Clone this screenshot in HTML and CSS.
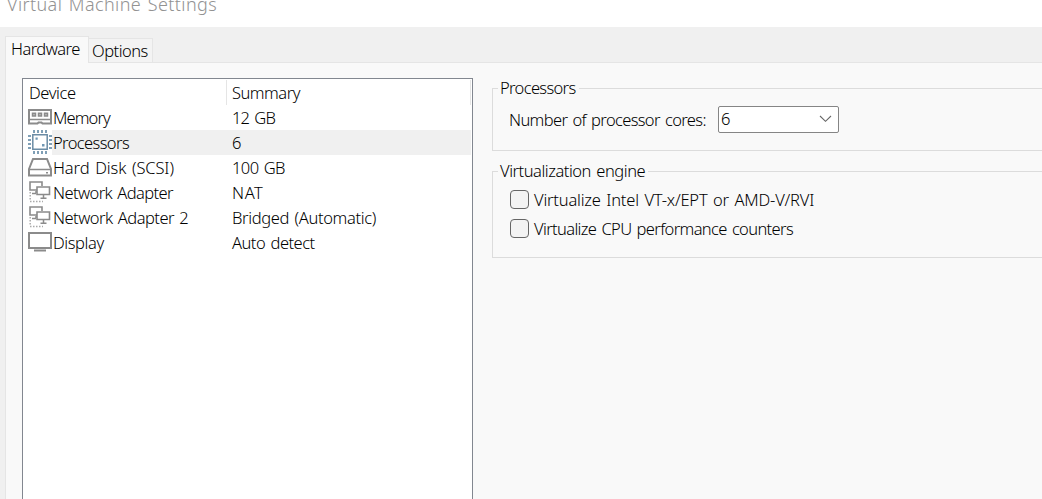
FILE: index.html
```html
<!DOCTYPE html>
<html lang="en">
<head>
<meta charset="utf-8">
<title>Virtual Machine Settings</title>
<link rel="stylesheet" href="styles.css">
</head>
<body>
<header class="titlebar"><span class="title">Virtual Machine Settings</span></header>
<main class="dialog">
  <nav class="tabs">
    <div class="tab active"><span class="t-hardware">Hardware</span></div>
    <div class="tab"><span class="t-options">Options</span></div>
  </nav>
  <section class="page">
    <div class="devices">
      <div class="row head"><span class="name"><span class="t-device">Device</span></span><span class="value"><span class="t-summary">Summary</span></span></div>
      <div class="row">
        <svg class="icon" viewBox="0 0 24 25" fill="none" stroke="#8b8b8b" stroke-width="2"><path d="M1 5H23V18.5H14.5L13.5 17.5H10.5L9.5 18.5H1Z"/><path d="M1 14.5H23" stroke-width="1.5"/><path d="M4.5 8.2H7.5V11H4.5ZM10.5 8.2H13.5V11H10.5ZM16.5 8.2H19.5V11H16.5Z" fill="#bbb" stroke-width="1.5"/></svg>
        <span class="name"><span class="t-memory">Memory</span></span><span class="value"><span class="t-12">12 GB</span></span>
      </div>
      <div class="row selected">
        <svg class="icon" viewBox="0 0 24 25" fill="none" stroke="#6b8ca5"><path stroke="#7f9fb6" stroke-width="3" stroke-dasharray="2 2" d="M5 1.5H19M5 22.5H19M1.5 5V19M22.5 5V19"/><path stroke-width="1.5" d="M4.8 4.8H19.2V19.2H4.8Z" fill="#fff"/><path fill="#7097b4" stroke="none" d="M7.5 7.5h2.2v2.2H7.5zM14 14h2.5v2.5h-2.5z"/></svg>
        <span class="name"><span class="t-processors">Processors</span></span><span class="value"><span class="t-6">6</span></span>
      </div>
      <div class="row">
        <svg class="icon" viewBox="0 0 24 25" fill="none" stroke="#8b8b8b" stroke-width="2"><path d="M1 14L5 4H19L23 14V20.5H1Z"/><path d="M1 14.5H23" stroke-width="1.5"/><path fill="#8b8b8b" stroke="none" d="M18 17h2v1.5h-2z"/></svg>
        <span class="name"><span class="t-disk">Hard Disk (SCSI)</span></span><span class="value"><span class="t-100">100 GB</span></span>
      </div>
      <div class="row">
        <svg class="icon" viewBox="0 0 24 25"><use href="#network"/></svg>
        <span class="name"><span class="t-net">Network Adapter</span></span><span class="value"><span class="t-nat">NAT</span></span>
      </div>
      <div class="row">
        <svg class="icon" viewBox="0 0 24 25"><g id="network" fill="none" stroke="#8b8b8b" stroke-width="1.6"><path d="M9 10H2V2H14V6M9 7H21.5V14.5H9Z"/><path d="M8 11V13M4 13.5H8M15.5 15V18M12.5 18.2H18.5" stroke-width="1.5"/><path d="M2.2 12V21M2 21.5H15" stroke="#aaa" stroke-width="1.5" stroke-dasharray="1.5 1.5"/></g></svg>
        <span class="name"><span class="t-net2">Network Adapter 2</span></span><span class="value"><span class="t-bridged">Bridged (Automatic)</span></span>
      </div>
      <div class="row">
        <svg class="icon" viewBox="0 0 24 25" fill="none" stroke="#8b8b8b" stroke-width="2"><path d="M1 3H23V18H1Z"/><path d="M6 20.5H18"/></svg>
        <span class="name"><span class="t-display">Display</span></span><span class="value"><span class="t-auto">Auto detect</span></span>
      </div>
    </div>
    <div class="settings">
      <fieldset class="group processors">
        <legend><span class="t-group">Processors</span></legend>
        <div class="field">
          <span class="t-cores">Number of processor cores:</span>
          <div class="combo"><span class="t-6">6</span><svg width="13" height="8" viewBox="0 0 13 8" fill="none" stroke="#666" stroke-width="1.1"><path d="M1 1L6.5 6.3L12 1"/></svg></div>
        </div>
      </fieldset>
      <fieldset class="group engine">
        <legend><span class="t-engine">Virtualization engine</span></legend>
        <div class="option"><i class="box"></i><span class="t-vtx">Virtualize Intel VT-x/EPT or AMD-V/RVI</span></div>
        <div class="option"><i class="box"></i><span class="t-cpu">Virtualize CPU performance counters</span></div>
      </fieldset>
    </div>
  </section>
</main>
</body>
</html>
```
FILE: styles.css
```css
* { box-sizing: border-box; }
body {
  margin: 0;
  width: 1042px;
  height: 499px;
  overflow: hidden;
  background: #f0f0f0;
  color: #000;
  font: 300 16.5px/20px "Noto Sans", "DejaVu Sans", sans-serif;
  white-space: nowrap;
  word-spacing: 1.5px;
}
.titlebar { height: 27px; background: #fff; overflow: hidden; padding-left: 7px; }
.title { display: block; margin-top: -6px; font-size: 18px; line-height: 20px; color: #929292; letter-spacing: .4px; }
.dialog { height: 472px; padding: 9px 0 0 5px; }
.tabs { display: flex; align-items: flex-end; height: 26px; }
.tab { width: 64px; height: 24px; padding: 2px 0 0 3px; border: 1px solid #e5e5e5; border-left: 0; border-bottom: 0; background: #f3f3f3; }
.tab.active { width: 84px; height: 27px; margin-bottom: -1px; padding: 2px 0 0 5px; border-left: 1px solid #e5e5e5; background: #f9f9f9; z-index: 1; }
.page { display: flex; align-items: flex-start; width: 1040px; height: 440px; padding: 15px 0 0 16px; border: 1px solid #e5e5e5; background: #f9f9f9; }
.devices { flex: none; width: 451px; height: 430px; padding: 1px; border: 1px solid #828790; background: #fff; }
.row { display: flex; align-items: center; height: 25px; padding-left: 4px; }
.icon { width: 24px; height: 25px; flex: none; }
.name { width: 174px; height: 25px; padding: 3px 0 0 1px; }
.value { flex: 1; height: 25px; padding: 3px 0 0 6px; }
.head .name { width: 199px; border-right: 1px solid #e5e5e5; }
.head .value { border-right: 1px solid #e5e5e5; padding-left: 5px; }
.selected .name, .selected .value { background: #f0f0f0; }
.settings { flex: none; width: 580px; padding: 0 0 0 19px; }
.group { margin: 0; border: 1px solid #dcdcdc; min-width: 0; }
.group legend { height: 20px; padding: 0 3px 0 2px; }
.processors { height: 73px; padding: 0 0 0 16px; }
.processors legend { margin-left: -11px; }
.engine { height: 97px; margin-top: 10px; padding: 0 0 0 17px; }
.engine legend { margin-left: -12px; }
.field { display: flex; align-items: center; height: 26px; margin-top: 8px; }
.combo { display: flex; align-items: center; justify-content: space-between; width: 121px; height: 27px; padding: 0 6px 0 2px; border: 1px solid #858585; border-radius: 2px; background: #fff; }
.option { display: flex; align-items: center; height: 29px; gap: 5px; }
.engine legend + .option { margin-top: 4px; }
.box { width: 19px; height: 19px; border: 1px solid #666; border-radius: 4px; background: #f3f3f3; }

.t-hardware { letter-spacing: -.55px; }
.t-options { letter-spacing: -.5px; }
.t-device { letter-spacing: -.4px; }
.t-summary { letter-spacing: -.5px; }
.t-memory { letter-spacing: -.9px; }
.t-processors { letter-spacing: -.6px; }
.t-group { letter-spacing: -.65px; }
.t-disk { letter-spacing: -.1px; }
.t-net { letter-spacing: -.6px; }
.t-net2 { letter-spacing: -.53px; }
.t-display { letter-spacing: -.4px; }
.t-12 { letter-spacing: -.8px; }
.t-100 { letter-spacing: -.6px; }
.t-nat { letter-spacing: .6px; }
.t-bridged { letter-spacing: -.35px; }
.t-auto { letter-spacing: -.5px; }
.t-cores { width: 209px; padding-top: 2px; letter-spacing: -.64px; }
.t-engine { letter-spacing: -.46px; }
.t-vtx { letter-spacing: -.2px; }
.t-cpu { letter-spacing: -.64px; }
```
